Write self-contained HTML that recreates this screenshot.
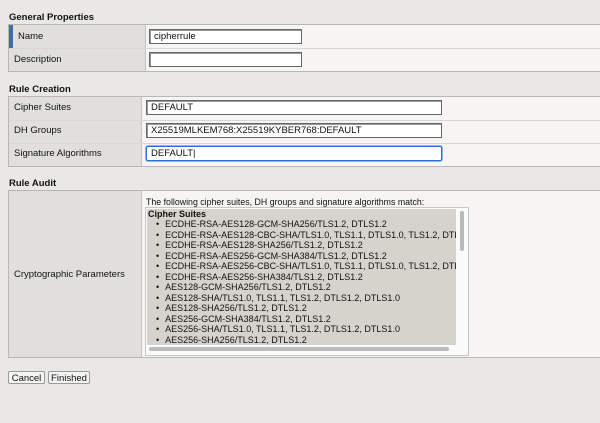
<!DOCTYPE html>
<html><head><style>
body{margin:0;width:600px;height:423px;background:#e9e8e4;font-family:"Liberation Sans",sans-serif;font-size:9.5px;color:#111;position:relative;overflow:hidden}
.a{position:absolute}
.h{font-weight:bold;font-size:9.5px}
.lab{background:#e0dfdb;border-right:1px solid #c4c3bf}
.val{background:#f6f5f3}
.inp{position:absolute;background:#fff;border:1px solid #666;box-shadow:inset 1px 1px 0 #999;font-size:9.5px;line-height:14px;padding-left:4px;box-sizing:border-box;height:15px}
.rowline{position:absolute;height:1px;background:#d8d7d3}
ul{margin:0;padding:0 0 0 9px;list-style:none}
li{height:10.55px;line-height:10.55px;white-space:nowrap}
li:before{content:"•";margin-right:6px;font-size:9px}
.btn{position:absolute;top:371px;height:13px;border:1px solid #999;border-radius:2px;background:#f4f4f2;font-size:9.5px;line-height:13px;text-align:center;box-sizing:border-box}
</style></head><body>
<div class="a h" style="left:9px;top:12px">General Properties</div>
<div class="a" style="left:8px;top:24px;width:592px;height:48px;border-top:1px solid #b8b7b3;border-bottom:1px solid #b8b7b3;border-left:1px solid #b8b7b3;box-sizing:border-box"></div>
<div class="a lab" style="left:9px;top:25px;width:136px;height:46px"></div>
<div class="a val" style="left:146px;top:25px;width:454px;height:46px"></div>
<div class="rowline" style="left:9px;top:48px;width:591px"></div>
<div class="a" style="left:9px;top:25px;width:4px;height:23px;background:#3f6ea5"></div>
<div class="a" style="left:18px;top:31px">Name</div>
<div class="a" style="left:14px;top:54px">Description</div>
<div class="inp" style="left:149px;top:29px;width:153px">cipherrule</div>
<div class="inp" style="left:149px;top:52px;width:153px"></div>

<div class="a h" style="left:9px;top:84px">Rule Creation</div>
<div class="a" style="left:8px;top:96px;width:592px;height:71px;border-top:1px solid #b8b7b3;border-bottom:1px solid #b8b7b3;border-left:1px solid #b8b7b3;box-sizing:border-box"></div>
<div class="a lab" style="left:9px;top:97px;width:132px;height:69px"></div>
<div class="a val" style="left:142px;top:97px;width:458px;height:69px"></div>
<div class="rowline" style="left:9px;top:120px;width:591px"></div>
<div class="rowline" style="left:9px;top:143px;width:591px"></div>
<div class="a" style="left:14px;top:102px">Cipher Suites</div>
<div class="a" style="left:14px;top:125px">DH Groups</div>
<div class="a" style="left:14px;top:148px">Signature Algorithms</div>
<div class="inp" style="left:146px;top:100px;width:296px">DEFAULT</div>
<div class="inp" style="left:146px;top:123px;width:296px">X25519MLKEM768:X25519KYBER768:DEFAULT</div>
<div class="inp" style="left:146px;top:146px;width:296px;border:1px solid #2a6fd6;box-shadow:0 0 0 1px #8fb5ea;border-radius:2px">DEFAULT|</div>

<div class="a h" style="left:9px;top:178px">Rule Audit</div>
<div class="a" style="left:8px;top:190px;width:592px;height:168px;border-top:1px solid #b8b7b3;border-bottom:1px solid #b8b7b3;border-left:1px solid #b8b7b3;box-sizing:border-box"></div>
<div class="a lab" style="left:9px;top:191px;width:132px;height:166px"></div>
<div class="a val" style="left:142px;top:191px;width:458px;height:166px"></div>
<div class="a" style="left:14px;top:269px">Cryptographic Parameters</div>
<div class="a" style="left:146px;top:197px;font-size:8.8px">The following cipher suites, DH groups and signature algorithms match:</div>
<div class="a" style="left:145px;top:207px;width:324px;height:149px;border:1px solid #c8c7c3;background:#fafafa;box-sizing:border-box"></div>
<div class="a" style="left:147px;top:209px;width:309px;height:136px;background:#d6d3cc;overflow:hidden;font-size:9px">
<div style="font-weight:bold;padding-left:1px;line-height:10px">Cipher Suites</div>
<ul>
<li>ECDHE-RSA-AES128-GCM-SHA256/TLS1.2, DTLS1.2</li>
<li>ECDHE-RSA-AES128-CBC-SHA/TLS1.0, TLS1.1, DTLS1.0, TLS1.2, DTLS1.2</li>
<li>ECDHE-RSA-AES128-SHA256/TLS1.2, DTLS1.2</li>
<li>ECDHE-RSA-AES256-GCM-SHA384/TLS1.2, DTLS1.2</li>
<li>ECDHE-RSA-AES256-CBC-SHA/TLS1.0, TLS1.1, DTLS1.0, TLS1.2, DTLS1.2</li>
<li>ECDHE-RSA-AES256-SHA384/TLS1.2, DTLS1.2</li>
<li>AES128-GCM-SHA256/TLS1.2, DTLS1.2</li>
<li>AES128-SHA/TLS1.0, TLS1.1, TLS1.2, DTLS1.2, DTLS1.0</li>
<li>AES128-SHA256/TLS1.2, DTLS1.2</li>
<li>AES256-GCM-SHA384/TLS1.2, DTLS1.2</li>
<li>AES256-SHA/TLS1.0, TLS1.1, TLS1.2, DTLS1.2, DTLS1.0</li>
<li>AES256-SHA256/TLS1.2, DTLS1.2</li>
</ul></div>
<div class="a" style="left:460px;top:211px;width:4px;height:40px;background:#bbb;border-radius:2px"></div>
<div class="a" style="left:149px;top:347px;width:300px;height:4px;background:#bbb;border-radius:2px"></div>

<div class="btn" style="left:8px;width:37px">Cancel</div>
<div class="btn" style="left:48px;width:42px">Finished</div>
</body></html>
